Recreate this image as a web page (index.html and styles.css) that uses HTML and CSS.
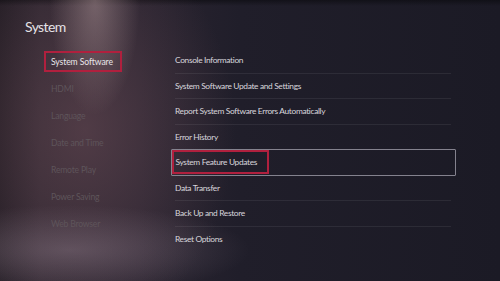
FILE: index.html
```html
<!DOCTYPE html>
<html lang="en">
<head>
    <meta charset="UTF-8">
    <meta name="viewport" content="width=device-width, initial-scale=1.0">
    <title>System</title>
    <link rel="stylesheet" href="styles.css">
</head>
<body>

<div class="screen">
    <h1 class="title">System</h1>
    <div class="panes">
        <ul class="side">
            <li class="side-item active"><span class="mark">System Software</span></li>
            <li class="side-item"><span>HDMI</span></li>
            <li class="side-item"><span>Language</span></li>
            <li class="side-item"><span>Date and Time</span></li>
            <li class="side-item"><span>Remote Play</span></li>
            <li class="side-item"><span>Power Saving</span></li>
            <li class="side-item"><span>Web Browser</span></li>
        </ul>
        <ul class="options">
            <li class="opt">Console Information</li>
            <li class="opt">System Software Update and Settings</li>
            <li class="opt">Report System Software Errors Automatically</li>
            <li class="opt">Error History</li>
            <li class="opt focus"><span class="mark">System Feature Updates</span></li>
            <li class="opt">Data Transfer</li>
            <li class="opt">Back Up and Restore</li>
            <li class="opt last">Reset Options</li>
        </ul>
    </div>
</div>

</body>
</html>
```

FILE: styles.css
```css
html, body {
    margin: 0;
    padding: 0;
}
body {
    width: 500px;
    height: 281px;
    overflow: hidden;
    font-family: Lato, "Open Sans", sans-serif;
    background-color: #1c1b26;
}
.screen {
    width: 500px;
    height: 281px;
    box-sizing: border-box;
    background:
        radial-gradient(ellipse 45px 115px at 95px 0px, rgba(215, 185, 185, 0.38), rgba(215, 185, 185, 0) 100%),
        radial-gradient(ellipse 180px 45px at 70px 250px, rgba(170, 150, 165, 0.34), rgba(170, 150, 165, 0) 100%),
        radial-gradient(ellipse 150px 200px at 85px 130px, rgba(130, 90, 100, 0.42), rgba(130, 90, 100, 0) 100%),
        linear-gradient(to bottom, rgba(10, 10, 14, 0.6) 0px, rgba(10, 10, 14, 0) 6px),
        linear-gradient(to right, #231d25 0px, #2e2630 40px, #2a2430 140px, #201e2a 240px, #1b1a25 500px);
}
.title {
    margin: 0;
    padding: 19px 0 0 25px;
    height: 29px;
    box-sizing: border-box;
    font-size: 14px;
    font-weight: 400;
    line-height: 16px;
    color: #e4e2e6;
    letter-spacing: -0.6px;
}
.panes {
    display: flex;
    padding-top: 19px;
}
.side {
    list-style: none;
    margin: 0;
    padding: 0 0 0 44px;
    width: 126px;
}
.side-item {
    height: 27.1px;
    display: flex;
    align-items: center;
    font-size: 8.6px;
    letter-spacing: -0.2px;
    color: #5e545a;
}
.side-item span {
    display: inline-flex;
    align-items: center;
    height: 21px;
    box-sizing: border-box;
    padding: 0 7px 0 5px;
    border: 2px solid transparent;
}
.side-item.active {
    color: #e8e6ea;
    letter-spacing: -0.1px;
}
.mark {
    border: 2px solid #b0203e !important;
}
.options {
    list-style: none;
    margin: 0;
    padding: 0 0 0 5px;
    width: 276px;
}
.opt {
    height: 25.5px;
    box-sizing: border-box;
    display: flex;
    align-items: center;
    border-bottom: 1px solid rgba(255, 255, 255, 0.07);
    font-size: 8.4px;
    letter-spacing: -0.35px;
    color: #d8d6dc;
}
.opt.last {
    border-bottom: none;
}
.opt.focus {
    height: 26.5px;
    margin: -1px -5px 0 -4.5px;
    border: 1px solid #84828e;
    border-radius: 1px;
}
.opt.focus .mark {
    display: inline-flex;
    align-items: center;
    height: 24px;
    box-sizing: border-box;
    padding: 0 10px 0 2px;
}
```
